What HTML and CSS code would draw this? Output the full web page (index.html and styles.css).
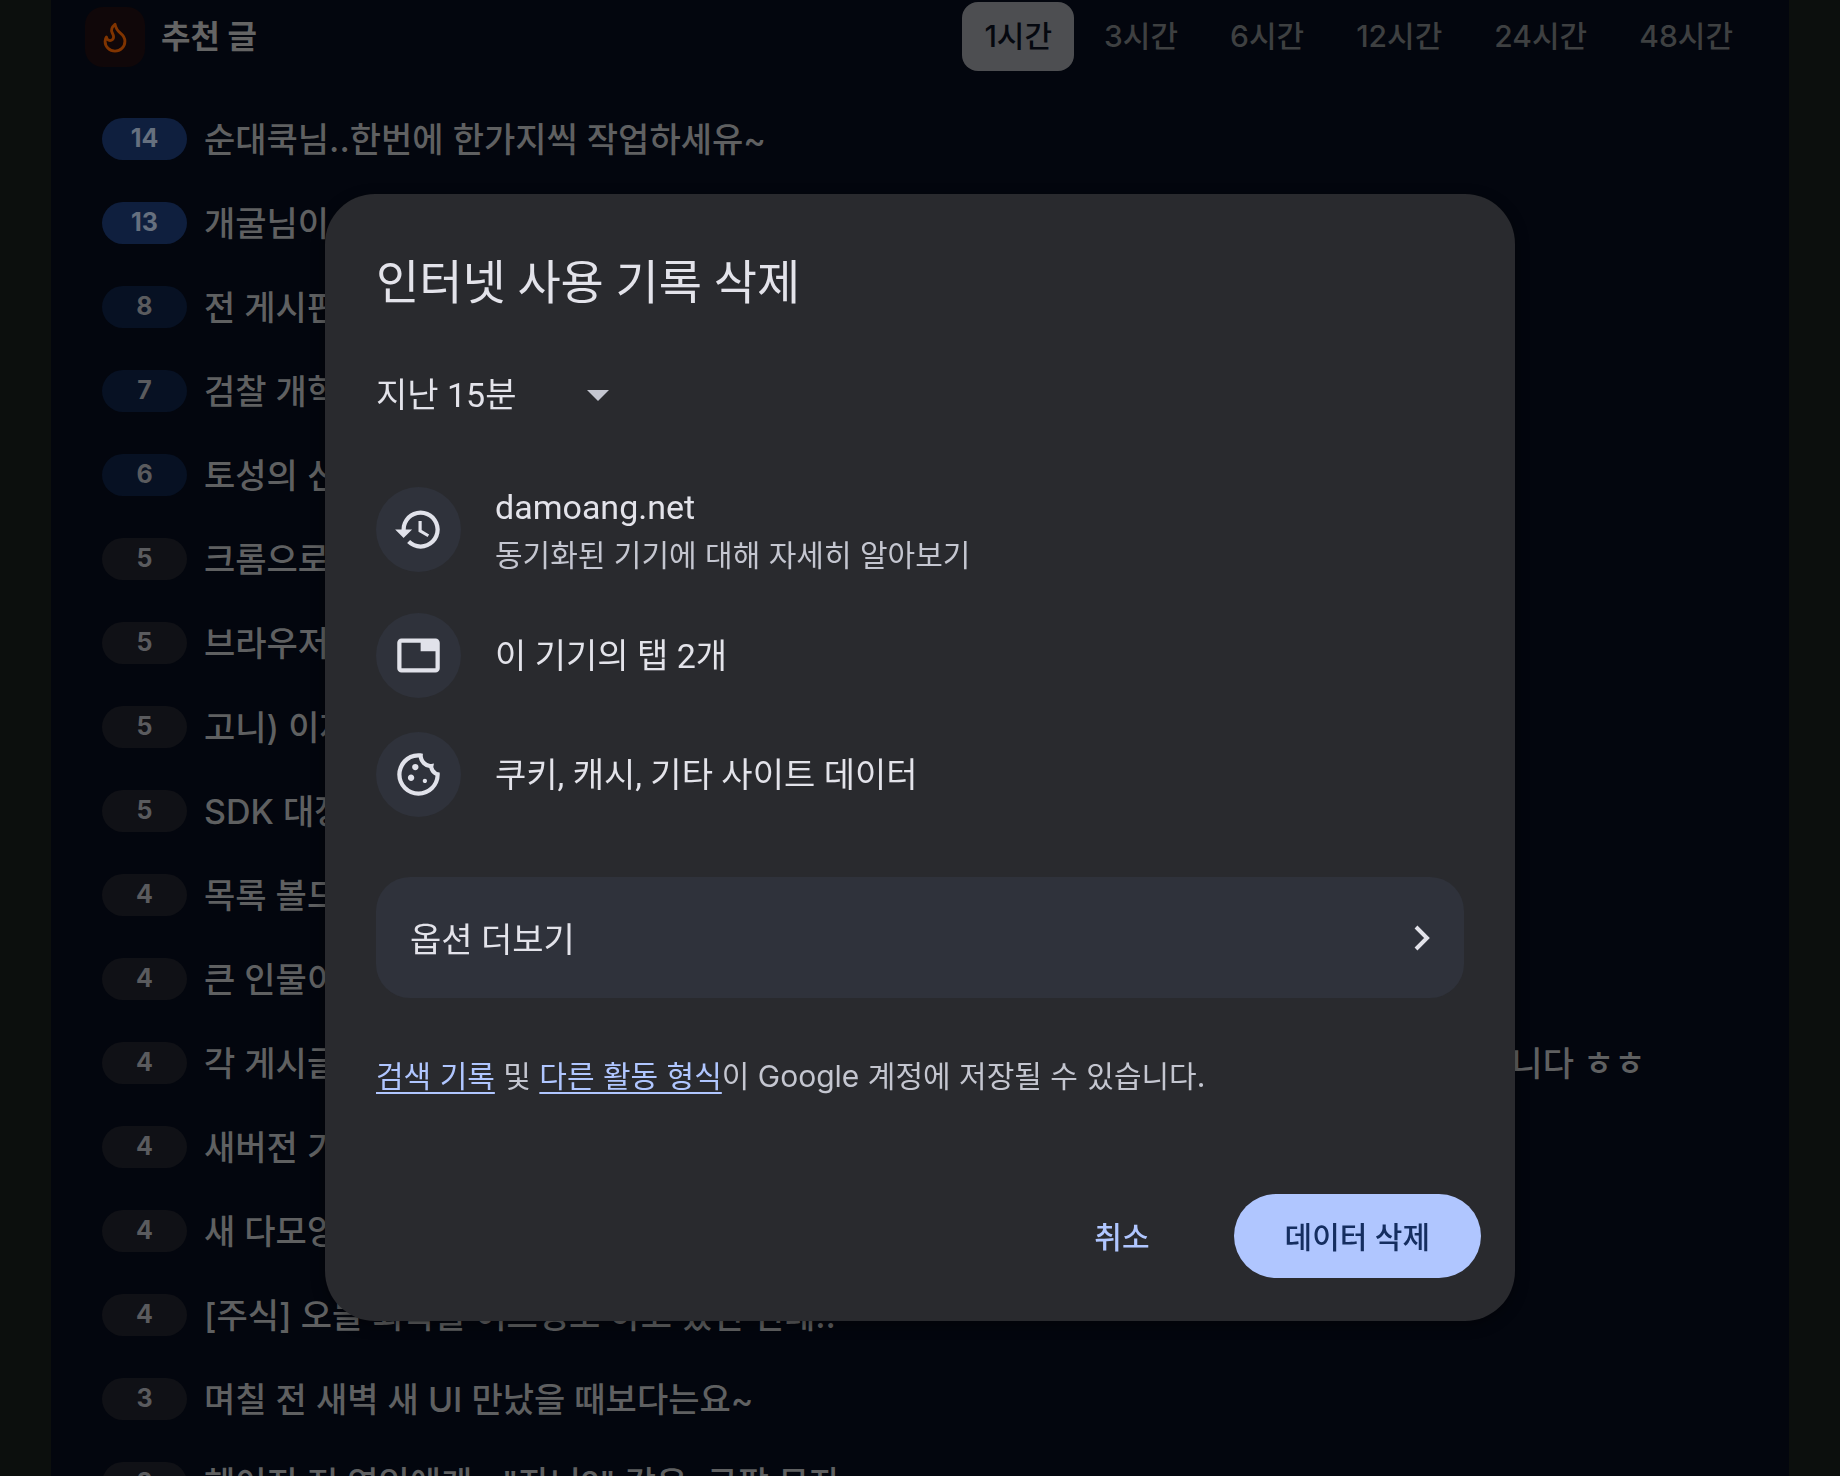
FILE: index.html
```html
<!DOCTYPE html>
<html lang="ko">
<head>
    <meta charset="UTF-8">
    <meta name="viewport" content="width=device-width, initial-scale=1.0">
    <title>추천 글</title>
    <link rel="stylesheet" href="styles.css">
</head>
<body>
    <main class="board">
        <header class="board-header">
            <div class="board-icon">
                <svg viewBox="0 0 24 24" fill="none" stroke="currentColor" stroke-width="2" stroke-linecap="round" stroke-linejoin="round">
                    <path d="M8.5 14.5A2.5 2.5 0 0 0 11 12c0-1.38-.5-2-1-3-1.072-2.143-.224-4.054 2-6 .5 2.5 2 4.9 4 6.5 2 1.6 3 3.5 3 5.5a7 7 0 1 1-14 0c0-1.153.433-2.294 1-3a2.5 2.5 0 0 0 2.5 2.5z"/>
                </svg>
            </div>
            <h2>추천 글</h2>
            <nav class="tabs">
                <button type="button" class="tab active">1시간</button>
                <button type="button" class="tab">3시간</button>
                <button type="button" class="tab">6시간</button>
                <button type="button" class="tab">12시간</button>
                <button type="button" class="tab">24시간</button>
                <button type="button" class="tab">48시간</button>
            </nav>
        </header>
        <ul class="posts">
            <li><span class="count hot">14</span><a href="#">순대쿡님..한번에 한가지씩 작업하세유~</a></li>
            <li><span class="count hot">13</span><a href="#">개굴님이</a></li>
            <li><span class="count warm">8</span><a href="#">전 게시판</a></li>
            <li><span class="count warm">7</span><a href="#">검찰 개혁</a></li>
            <li><span class="count warm">6</span><a href="#">토성의 신</a></li>
            <li><span class="count">5</span><a href="#">크롬으로</a></li>
            <li><span class="count">5</span><a href="#">브라우저</a></li>
            <li><span class="count">5</span><a href="#">고니) 이제</a></li>
            <li><span class="count">5</span><a href="#">SDK 대장</a></li>
            <li><span class="count">4</span><a href="#">목록 볼드</a></li>
            <li><span class="count">4</span><a href="#">큰 인물이</a></li>
            <li><span class="count">4</span><a href="#">각 게시글 목록에서 제목을 눌러보면, 바로 글이 열려있고 댓글까지 다같이 보여서 굉장히 편합니다 ㅎㅎ</a></li>
            <li><span class="count">4</span><a href="#">새버전 기</a></li>
            <li><span class="count">4</span><a href="#">새 다모앙</a></li>
            <li><span class="count">4</span><a href="#">[주식] 오늘 회복을 어느정도 하고 있던 건데..</a></li>
            <li><span class="count">3</span><a href="#">며칠 전 새벽 새 UI 만났을 때보다는요~</a></li>
            <li><span class="count">3</span><a href="#">헤어진 전 연인에게.. "자니?" 같은, 금팔 문자</a></li>
        </ul>
    </main>

    <div class="overlay">
        <section class="dialog" role="dialog" aria-labelledby="dialog-title">
            <h1 id="dialog-title">인터넷 사용 기록 삭제</h1>
            <div class="period">
                <select aria-label="기간">
                    <option>지난 15분</option>
                    <option>지난 1시간</option>
                </select>
                <svg viewBox="0 0 22 11"><path d="M0 0h22L11 11z"/></svg>
            </div>
            <ul class="items">
                <li>
                    <span class="item-icon">
                        <svg viewBox="0 0 24 24"><path d="M13 3c-4.97 0-9 4.03-9 9H1l3.89 3.89.07.14L9 12H6c0-3.87 3.13-7 7-7s7 3.13 7 7-3.13 7-7 7c-1.93 0-3.68-.79-4.94-2.06l-1.42 1.42C8.27 19.99 10.51 21 13 21c4.97 0 9-4.03 9-9s-4.03-9-9-9zm-1 5v5l4.28 2.54.72-1.21-3.5-2.08V8H12z"/></svg>
                    </span>
                    <div class="item-text">
                        <p>damoang.net</p>
                        <p class="sub">동기화된 기기에 대해 자세히 알아보기</p>
                    </div>
                </li>
                <li>
                    <span class="item-icon">
                        <svg viewBox="0 0 24 24"><path fill-rule="evenodd" d="M4 4h16a2 2 0 0 1 2 2v12a2 2 0 0 1-2 2H4a2 2 0 0 1-2-2V6a2 2 0 0 1 2-2zm0 2v12h16v-8h-7V6z"/></svg>
                    </span>
                    <p>이 기기의 탭 2개</p>
                </li>
                <li>
                    <span class="item-icon">
                        <svg viewBox="0 -960 960 960"><path d="M480-80q-83 0-156-31.500T197-197q-54-54-85.500-127T80-480q0-75 29-147t81-128.500q52-56.500 125-91T475-881q21 0 43 2t45 7q-9 45 6 85t45 66.500q30 26.500 71.500 36.500t85.500-5q-26 59 7.500 113t99.500 56q1 11 1.500 20.500t.5 20.500q0 82-31.500 154.500t-85.500 127q-54 54.500-127 86T480-80Zm-60-480q25 0 42.500-17.500T480-620q0-25-17.500-42.500T420-680q-25 0-42.500 17.500T360-620q0 25 17.500 42.500T420-560Zm-80 200q25 0 42.500-17.500T400-420q0-25-17.500-42.500T340-480q-25 0-42.500 17.500T280-420q0 25 17.500 42.500T340-360Zm260 40q17 0 28.500-11.500T640-360q0-17-11.500-28.500T600-400q-17 0-28.500 11.500T560-360q0 17 11.500 28.500T600-320ZM480-160q122 0 216.500-84T800-458q-50-22-78.500-60T683-603q-77-11-132-66t-68-132q-80-2-140.500 29t-101 79.500Q201-644 180.500-587T160-480q0 133 93.500 226.500T480-160Z"/></svg>
                    </span>
                    <p>쿠키, 캐시, 기타 사이트 데이터</p>
                </li>
            </ul>
            <button type="button" class="more">
                <span>옵션 더보기</span>
                <svg viewBox="0 0 16 26" fill="none" stroke="currentColor" stroke-width="4"><path d="M2 2l11 11L2 24"/></svg>
            </button>
            <p class="notice"><a href="#">검색 기록</a> 및 <a href="#">다른 활동 형식</a>이 Google 계정에 저장될 수 있습니다.</p>
            <div class="actions">
                <button type="button" class="btn">취소</button>
                <button type="button" class="btn primary">데이터 삭제</button>
            </div>
        </section>
    </div>
</body>
</html>
```

FILE: styles.css
```css
* {
    box-sizing: border-box;
}
body {
    margin: 0;
    padding: 0 51px;
    height: 100vh;
    overflow: hidden;
    background-color: #0c0f0d;
    font-family: Inter, "Noto Sans CJK KR", sans-serif;
    color: #e3e3ea;
}
h1, h2, p, ul {
    margin: 0;
    padding: 0;
}
ul {
    list-style: none;
}
button, select {
    font-family: inherit;
    border: none;
    background: none;
    padding: 0;
    cursor: pointer;
}

/* post list */
.board {
    height: 100vh;
    overflow: hidden;
    background-color: #03060e;
}
.board-header {
    display: flex;
    align-items: center;
    height: 73px;
    padding: 0 34px;
}
.board-icon {
    display: flex;
    align-items: center;
    justify-content: center;
    width: 60px;
    height: 60px;
    border-radius: 18px;
    background-color: #100709;
    color: #803400;
}
.board-icon svg {
    width: 34px;
    height: 34px;
}
.board-header h2 {
    margin-left: 16px;
    padding-bottom: 6px;
    font-size: 32px;
    font-weight: 700;
    color: #646464;
}
.tabs {
    display: flex;
    gap: 8px;
    margin-left: auto;
}
.tab {
    height: 69px;
    padding: 0 22px 6px;
    border-radius: 16px;
    font-size: 30px;
    font-weight: 500;
    color: #3e4041;
}
.tab.active {
    background-color: #4d4e51;
    color: #05080f;
}
.posts {
    margin-top: 24px;
    padding: 0 51px;
}
.posts li {
    display: flex;
    align-items: center;
    gap: 17px;
    height: 84px;
}
.posts a {
    padding-bottom: 4px;
    font-size: 34px;
    font-weight: 500;
    color: #5f6061;
    text-decoration: none;
    white-space: nowrap;
}
.count {
    flex: none;
    width: 85px;
    height: 42px;
    border-radius: 21px;
    background-color: #101116;
    color: #5a5b5e;
    font-size: 25px;
    font-weight: 700;
    line-height: 41px;
    text-align: center;
}
.count.warm {
    background-color: #071123;
}
.count.hot {
    background-color: #0f1f3e;
    color: #66707f;
}

/* dialog */
.overlay {
    position: fixed;
    inset: 0;
    display: flex;
    align-items: flex-start;
    justify-content: center;
    padding-top: 194px;
}
.dialog {
    width: 100%;
    max-width: 1190px;
    padding: 59px 51px 43px;
    border-radius: 50px;
    background-color: #292a2e;
    box-shadow: 0 4px 14px rgba(0, 0, 0, 0.4);
    font-family: Roboto, "Noto Sans CJK KR", sans-serif;
}
.dialog h1 {
    font-size: 47px;
    font-weight: 400;
    line-height: 60px;
}
.period {
    position: relative;
    width: 233px;
    margin-top: 48px;
}
.period select {
    width: 100%;
    height: 68px;
    appearance: none;
    font-size: 34px;
    color: inherit;
}
.period svg {
    position: absolute;
    top: 29px;
    right: 0;
    width: 22px;
    height: 11px;
    fill: #c4c6d0;
    pointer-events: none;
}
.items {
    display: flex;
    flex-direction: column;
    gap: 34px;
    margin-top: 50px;
}
.items li {
    display: flex;
    align-items: center;
    gap: 34px;
    font-size: 34px;
    line-height: 48px;
}
.item-text {
    padding-top: 4px;
}
.sub, .notice {
    font-family: Inter, "Noto Sans CJK KR", sans-serif;
    font-size: 30px;
    color: #c4c6d0;
}
.item-icon {
    display: flex;
    align-items: center;
    justify-content: center;
    flex: none;
    width: 85px;
    height: 85px;
    border-radius: 50%;
    background-color: #2f323b;
}
.item-icon svg {
    width: 51px;
    height: 51px;
    fill: #e1e2ea;
}
.more {
    display: flex;
    align-items: center;
    justify-content: space-between;
    width: 100%;
    height: 121px;
    margin-top: 60px;
    padding: 0 34px;
    border-radius: 34px;
    background-color: #2f323b;
    font-size: 34px;
    color: #e3e3ea;
}
.more svg {
    width: 16px;
    height: 26px;
}
.notice {
    margin-top: 56px;
    line-height: 44px;
}
.notice a {
    color: #b0c6ff;
    text-decoration-thickness: 2px;
    text-underline-offset: 5px;
}
.actions {
    display: flex;
    justify-content: flex-end;
    gap: 33px;
    margin-top: 96px;
    margin-right: -17px;
}
.btn {
    height: 84px;
    padding: 0 51px 2px;
    border-radius: 42px;
    font-size: 30px;
    font-weight: 500;
    color: #b0c6ff;
}
.btn.primary {
    background-color: #b0c6ff;
    color: #152e60;
}
```
